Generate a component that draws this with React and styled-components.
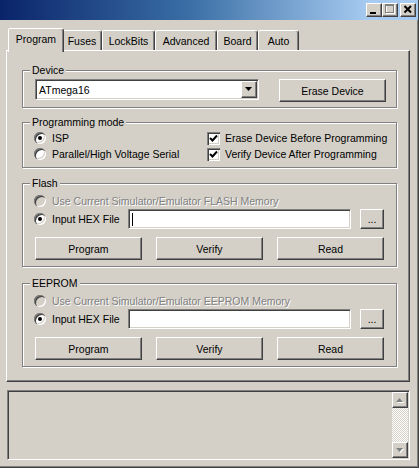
import React from 'react';
import styled, { createGlobalStyle, css } from 'styled-components';

const GlobalStyle = createGlobalStyle`
  html, body { margin: 0; padding: 0; background: #d4d0c8; }
  body {
    font-family: "Liberation Sans", Arial, sans-serif;
    font-size: 10.5px;
    color: #000;
  }
  * { box-sizing: border-box; }
`;

const raised = css`
  border: 1px solid;
  border-color: #fff #404040 #404040 #fff;
  box-shadow: inset -1px -1px 0 #808080;
  background: #d4d0c8;
`;

const sunken = css`
  border: 1px solid;
  border-color: #808080 #fff #fff #808080;
  box-shadow: inset 1px 1px 0 #404040, inset -1px -1px 0 #d4d0c8;
`;

const Window = styled.div`
  width: 419px;
  height: 468px;
  display: flex;
  flex-direction: column;
  background: #d4d0c8;
  border-right: 1px solid #404040;
  border-bottom: 1px solid #404040;
  box-shadow: inset -1px -1px 0 #808080;
  overflow: hidden;
`;

const TitleBar = styled.div`
  height: 20px;
  flex-shrink: 0;
  display: flex;
  align-items: center;
  justify-content: flex-end;
  padding-right: 2px;
  background: linear-gradient(to right, #0a246a 0%, #3a6ea5 45%, #a6caf0 88%);
`;

const TitleButton = styled.span`
  ${raised};
  width: 16px;
  height: 14px;
  display: flex;
  margin-left: ${p => p.$gap || 0}px;
`;

const Body = styled.div`
  padding: 8px 8px 0 6px;
  display: flex;
  flex-direction: column;
`;

const TabStrip = styled.div`
  height: 22px;
  display: flex;
  align-items: flex-end;
  padding-left: 4px;
`;

const Tab = styled.div`
  width: ${p => p.$w}px;
  height: 20px;
  padding-top: 1px;
  display: flex;
  align-items: center;
  justify-content: center;
  white-space: nowrap;
  background: #d4d0c8;
  border: 1px solid;
  border-bottom: none;
  border-color: #fff #404040 transparent #fff;
  border-radius: 2px 3px 0 0;
  box-shadow: inset -1px 0 0 #808080;
  ${p => p.$active && css`
    position: relative;
    z-index: 1;
    width: ${p.$w + 4}px;
    height: 24px;
    margin: 0 -2px -2px;
    padding: 0 0 4px;
  `}
`;

const Panel = styled.div`
  height: 332px;
  border: 1px solid;
  border-color: #fff #404040 #404040 #fff;
  box-shadow: inset -1px -1px 0 #808080;
  padding: 19px 12px 0 15px;
  display: flex;
  flex-direction: column;
`;

const Group = styled.div`
  position: relative;
  width: 375px;
  border: 1px solid #808080;
  box-shadow: inset 1px 1px 0 #fff, 1px 1px 0 #fff;
  margin-top: ${p => p.$gap || 0}px;
  padding: ${p => p.$pad};
`;

const Legend = styled.span`
  position: absolute;
  top: -7px;
  left: 7px;
  padding: 0 2px;
  line-height: 13px;
  background: #d4d0c8;
`;

const DeviceRow = styled.div`
  display: flex;
  align-items: flex-start;
  justify-content: space-between;
`;

const Combo = styled.div`
  ${sunken};
  width: 224px;
  height: 21px;
  background: #fff;
  display: flex;
  align-items: center;
  padding: 1px 1px 1px 3px;
`;

const ComboText = styled.span`
  flex: 1;
`;

const DropButton = styled.span`
  ${raised};
  width: 16px;
  height: 17px;
  display: flex;
  align-items: center;
  justify-content: center;
`;

const Button = styled.button`
  ${raised};
  width: ${p => p.$w || 107}px;
  height: ${p => p.$h || 23}px;
  padding: 0;
  font: inherit;
  color: #000;
  display: flex;
  align-items: center;
  justify-content: center;
`;

const ModeGrid = styled.div`
  display: grid;
  grid-template-columns: 173px 1fr;
  grid-auto-rows: 16px;
`;

const Option = styled.label`
  display: flex;
  align-items: center;
  gap: ${p => p.$gap ?? 6}px;
  height: 16px;
  width: ${p => (p.$w ? `${p.$w}px` : 'auto')};
  flex-shrink: 0;
  white-space: nowrap;
  color: ${p => (p.$disabled ? '#808080' : '#000')};
  text-shadow: ${p => (p.$disabled ? '1px 1px 0 #fff' : 'none')};
`;

const Radio = styled.span`
  width: 12px;
  height: 12px;
  flex-shrink: 0;
  border-radius: 50%;
  background: ${p => (p.$disabled ? '#d4d0c8' : '#fff')};
  box-shadow: inset 1px 1px 0 #808080, inset 2px 2px 0 #404040,
    inset -1px -1px 0 #fff, inset -2px -2px 0 #d4d0c8;
  display: flex;
  align-items: center;
  justify-content: center;
  &::after {
    content: '';
    display: ${p => (p.$checked ? 'block' : 'none')};
    width: 4px;
    height: 4px;
    border-radius: 50%;
    background: #000;
  }
`;

const Check = styled.span`
  width: 13px;
  height: 13px;
  flex-shrink: 0;
  background: #fff;
  box-shadow: inset 1px 1px 0 #808080, inset 2px 2px 0 #404040,
    inset -1px -1px 0 #fff, inset -2px -2px 0 #d4d0c8;
  display: flex;
`;

const FileRow = styled.div`
  display: flex;
  align-items: center;
  height: 20px;
`;

const Field = styled.div`
  ${sunken};
  width: 224px;
  height: 20px;
  background: #fff;
  display: flex;
  align-items: center;
  padding-left: 3px;
`;

const Caret = styled.span`
  width: 1px;
  height: 13px;
  background: #000;
`;

const ActionRow = styled.div`
  display: grid;
  grid-template-columns: repeat(3, 107px);
  column-gap: 14px;
  margin-top: 8px;
  padding-left: 1px;
`;

const LogBox = styled.div`
  ${sunken};
  margin: 8px 0 0 1px;
  width: 403px;
  height: 70px;
  background: #d4d0c8;
  padding: 1px;
  display: flex;
  justify-content: flex-end;
`;

const ScrollBar = styled.div`
  width: 16px;
  display: flex;
  flex-direction: column;
`;

const ScrollButton = styled.span`
  ${raised};
  height: 16px;
  display: flex;
  align-items: center;
  justify-content: center;
`;

const ScrollTrack = styled.div`
  flex: 1;
  background: repeating-conic-gradient(#fff 0 25%, #d4d0c8 0 50%) 0 0 / 2px 2px;
`;

const Arrow = ({ up, color = '#000', shadow }) => (
  <svg width="8" height="5" viewBox="0 0 8 5" style={{ overflow: 'visible' }}>
    {shadow && (
      <polygon
        points={up ? '1,5 8,5 4.5,1' : '1,1 8,1 4.5,5'}
        fill="#fff"
      />
    )}
    <polygon points={up ? '0,4 7,4 3.5,0' : '0,0 7,0 3.5,4'} fill={color} />
  </svg>
);

const CheckMark = () => (
  <svg width="13" height="13" viewBox="0 0 13 13">
    <polyline
      points="3,6 5.5,8.5 10,3.5"
      fill="none"
      stroke="#000"
      strokeWidth="2"
    />
  </svg>
);

const tabs = [
  ['Program', 52],
  ['Fuses', 40],
  ['LockBits', 53],
  ['Advanced', 62],
  ['Board', 41],
  ['Auto', 41],
];

function MemoryGroup({ title, memory, gap, caret }) {
  return (
    <Group $gap={gap} $pad="9px 12px 6px 11px">
      <Legend>{title}</Legend>
      <Option $disabled>
        <Radio $disabled />
        Use Current Simulator/Emulator {memory} Memory
      </Option>
      <FileRow>
        <Option $w={94}>
          <Radio $checked />
          Input HEX File
        </Option>
        <Field>{caret && <Caret />}</Field>
        <Button $w={24} $h={20} style={{ marginLeft: 9 }}>...</Button>
      </FileRow>
      <ActionRow>
        <Button>Program</Button>
        <Button>Verify</Button>
        <Button>Read</Button>
      </ActionRow>
    </Group>
  );
}

export default function App() {
  return (
    <>
      <GlobalStyle />
      <Window>
        <TitleBar>
          <TitleButton>
            <svg width="14" height="12" viewBox="0 0 14 12">
              <rect x="3" y="8" width="6" height="2" fill="#000" />
            </svg>
          </TitleButton>
          <TitleButton>
            <svg width="14" height="12" viewBox="0 0 14 12">
              <rect x="3.5" y="1.5" width="8" height="8" fill="none" stroke="#fff" />
              <rect x="2.5" y="0.5" width="8" height="8" fill="none" stroke="#808080" />
              <rect x="2" y="1" width="9" height="1" fill="#808080" />
            </svg>
          </TitleButton>
          <TitleButton $gap={2}>
            <svg width="14" height="12" viewBox="0 0 14 12">
              <path d="M3.5 2 L10 8.5 M10 2 L3.5 8.5" stroke="#000" strokeWidth="2" />
            </svg>
          </TitleButton>
        </TitleBar>
        <Body>
          <TabStrip>
            {tabs.map(([name, w], i) => (
              <Tab key={name} $w={w} $active={i === 0}>{name}</Tab>
            ))}
          </TabStrip>
          <Panel>
            <Group $pad="8px 10px 5px 12px">
              <Legend>Device</Legend>
              <DeviceRow>
                <Combo>
                  <ComboText>ATmega16</ComboText>
                  <DropButton>
                    <Arrow />
                  </DropButton>
                </Combo>
                <Button>Erase Device</Button>
              </DeviceRow>
            </Group>
            <Group $gap={14} $pad="7px 0 5px 11px">
              <Legend>Programming mode</Legend>
              <ModeGrid>
                <Option>
                  <Radio $checked />
                  ISP
                </Option>
                <Option $gap={5}>
                  <Check><CheckMark /></Check>
                  Erase Device Before Programming
                </Option>
                <Option>
                  <Radio />
                  Parallel/High Voltage Serial
                </Option>
                <Option $gap={5}>
                  <Check><CheckMark /></Check>
                  Verify Device After Programming
                </Option>
              </ModeGrid>
            </Group>
            <MemoryGroup title="Flash" memory="FLASH" gap={15} caret />
            <MemoryGroup title="EEPROM" memory="EEPROM" gap={16} />
          </Panel>
          <LogBox>
            <ScrollBar>
              <ScrollButton>
                <Arrow up color="#808080" shadow />
              </ScrollButton>
              <ScrollTrack />
              <ScrollButton>
                <Arrow color="#808080" shadow />
              </ScrollButton>
            </ScrollBar>
          </LogBox>
        </Body>
      </Window>
    </>
  );
}
